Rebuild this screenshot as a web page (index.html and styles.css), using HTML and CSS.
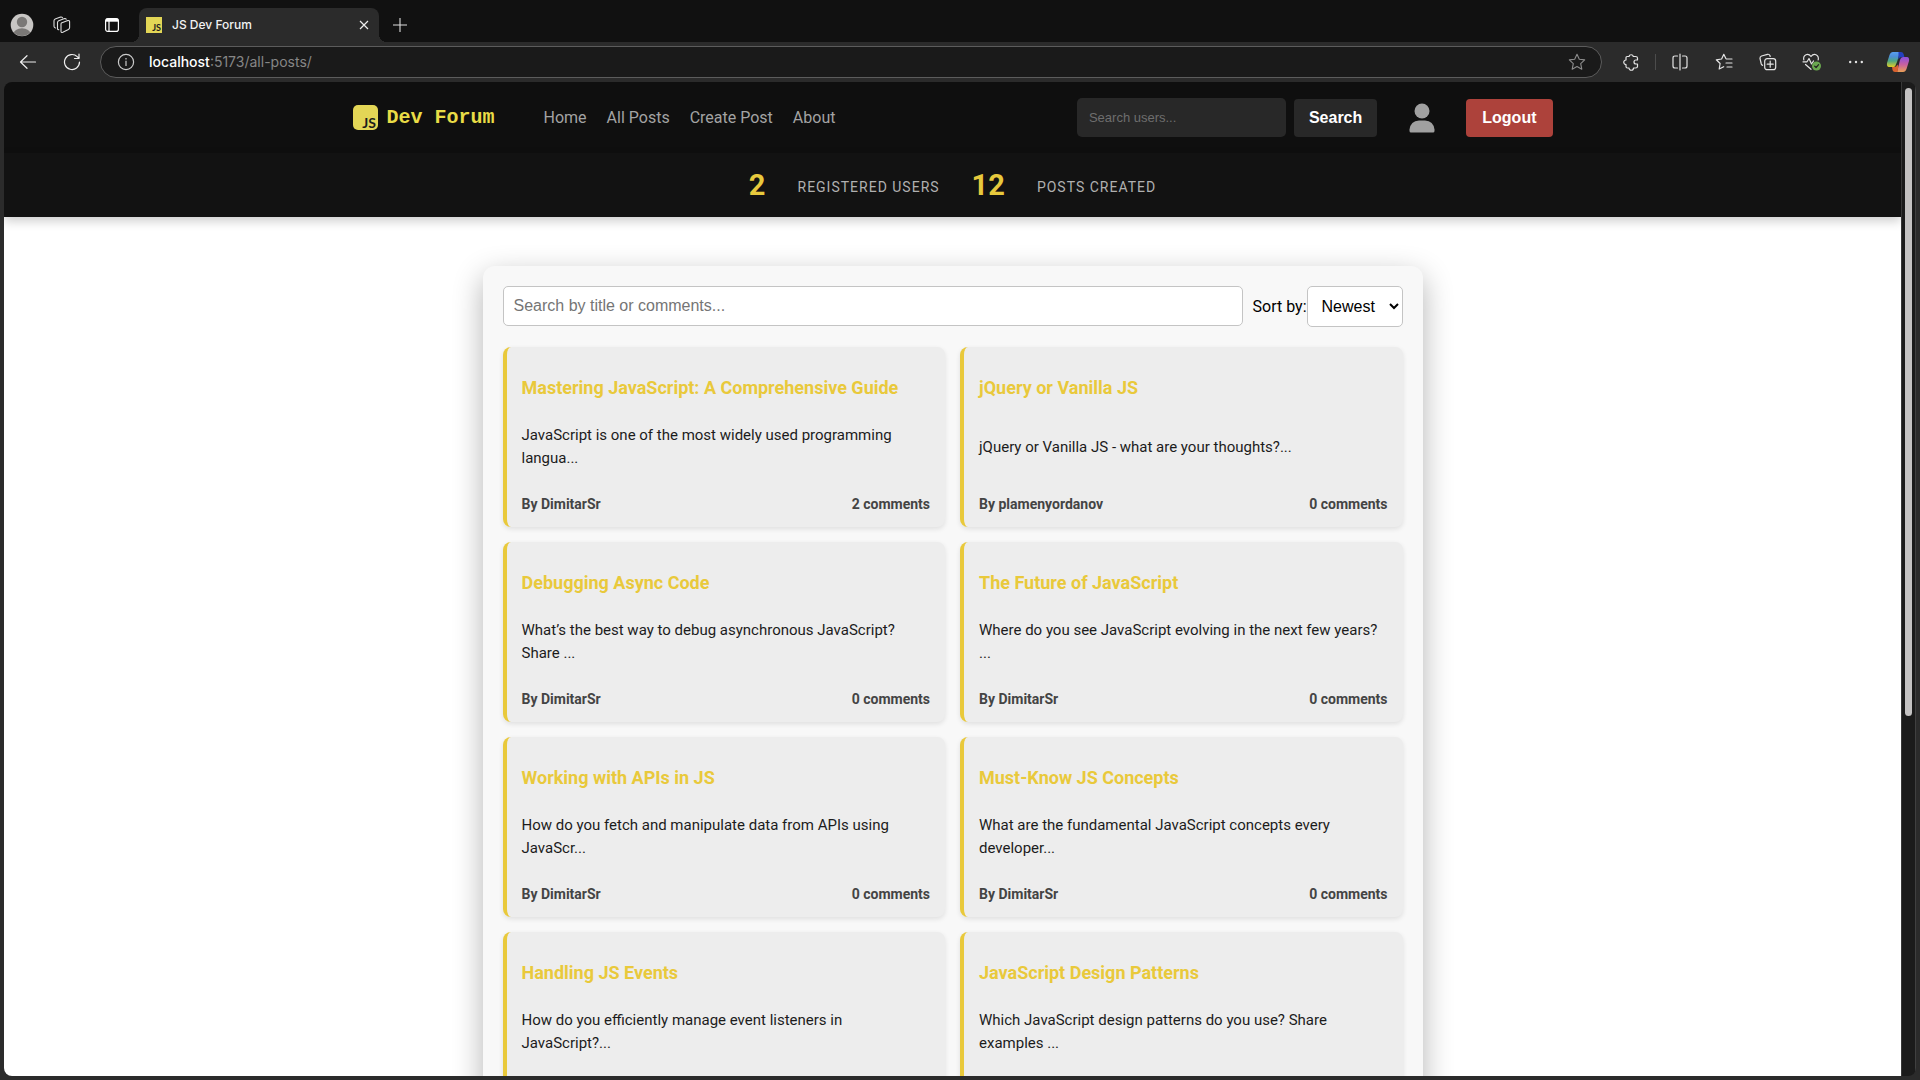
FILE: index.html
```html
<!DOCTYPE html>
<html lang="en">
<head>
<meta charset="utf-8">
<title>JS Dev Forum</title>
<link rel="stylesheet" href="styles.css">
</head>
<body>
<div class="tabstrip">
  <button class="icon-btn profile-btn" aria-label="Profile"><svg width="24" height="24" viewBox="0 0 24 24"><defs><clipPath id="pc"><circle cx="12" cy="12" r="11"/></clipPath></defs><circle cx="12" cy="12" r="11.300" fill="#c8c6c4"/><g clip-path="url(#pc)" fill="#7a7876"><circle cx="12" cy="9" r="5.200"/><ellipse cx="12" cy="21" rx="8.500" ry="5.800"/></g></svg></button>
  <button class="icon-btn spaces-btn" aria-label="Workspaces"><svg width="18" height="18" viewBox="0 0 18 18" fill="none" stroke="#ddd" stroke-width="1.1" stroke-linejoin="round" stroke-linecap="round"><path d="M8.3 7 14.8 4.6Q16.6 4.2 16.6 5.8V11.600Q16.600 13 15.400 13.500L9.800 16.300Q8 17 8 15.200V8.500Q8 7.500 8.300 7Z"/><path d="M5.800 13.800Q4.500 13.700 4.500 12.400V6.500Q4.500 5.200 5.700 4.700L11.500 2.600Q12.800 2.300 13.200 3.300"/><path d="M2.400 12Q1 11.500 1 10.300V4.800Q1 3.500 2.200 3L7.500 1.100Q8.900.7 9.500 1.800"/></svg></button>
  <button class="icon-btn tabs-btn" aria-label="Tab actions"><svg width="16" height="16" viewBox="0 0 16 16" fill="none" stroke="#fff" stroke-width="1.200"><rect x="1.600" y="1.600" width="12.800" height="12.800" rx="2.200"/><path d="M2 3.200h12" stroke-width="3"/><path d="M5 4v10.500"/></svg></button>
  <div class="tab">
    <svg width="16" height="16" viewBox="0 0 16 16"><rect width="16" height="16" fill="#e3d656"/><text x="15" y="14" text-anchor="end" class="js-small">JS</text></svg>
    <span class="tab-title">JS Dev Forum</span>
    <button class="icon-btn" aria-label="Close tab"><svg width="10" height="10" viewBox="0 0 10 10" stroke="#eee" stroke-width="1.200" fill="none"><path d="M1 1l8 8M9 1 1 9"/></svg></button>
  </div>
  <button class="icon-btn newtab-btn" aria-label="New tab"><svg width="14" height="14" viewBox="0 0 14 14" stroke="#ddd" stroke-width="1.100"><path d="M7 0v14M0 7h14"/></svg></button>
</div>

<div class="toolbar">
  <button class="icon-btn back-btn" aria-label="Back"><svg width="18" height="16" viewBox="0 0 18 16" fill="none" stroke="#eee" stroke-width="1.200" stroke-linecap="round" stroke-linejoin="round"><path d="M16.500 8H1.500M8 1.700 1.500 8 8 14.300"/></svg></button>
  <button class="icon-btn reload-btn" aria-label="Reload"><svg width="18" height="18" viewBox="0 0 18 18" fill="none" stroke="#eee" stroke-width="1.200" stroke-linecap="round" stroke-linejoin="round"><path d="M16.500 9A7.500 7.500 0 1 1 14.200 3.600L16 5.400M16 1v4.500h-4.500"/></svg></button>
  <div class="address">
    <svg width="18" height="18" viewBox="0 0 18 18" fill="none" stroke="#ccc" stroke-width="1.200"><circle cx="9" cy="9" r="7.600"/><path d="M9 7.800V13M9 5v1.400"/></svg>
    <span class="url"><b>localhost</b>:5173/all-posts/</span>
    <button class="icon-btn" aria-label="Add to favorites"><svg width="18" height="18" viewBox="0 0 18 18" fill="none" stroke="#8d8d8d" stroke-width="1.100" stroke-linejoin="round"><path d="M9 1.300 11.300 6.200 16.700 6.900 12.700 10.600 13.800 16.200 9 13.500 4.200 16.200 5.300 10.600 1.300 6.900 6.700 6.200Z"/></svg></button>
  </div>
  <div class="tools">
    <button class="icon-btn" aria-label="Extensions"><svg width="18" height="18" viewBox="0 0 18 18" fill="none" stroke="#e4e4e4" stroke-width="1.200" stroke-linejoin="round"><path d="M5 3.500H7A2.200 2.200 0 0 1 11.300 3.500H13.500Q15.500 3.500 15.500 5V7H14A2 2 0 0 0 14 11H15.500V13.500Q15.500 15 13.500 15H11.500A2.200 2.200 0 0 1 7 15H5.500Q4 15 4 13.500V11.500A2.200 2.200 0 0 1 4 7V4.500Q4 3.500 5 3.500Z"/></svg></button>
    <span class="divider"></span>
    <button class="icon-btn" aria-label="Split screen"><svg width="18" height="18" viewBox="0 0 18 18" fill="none" stroke="#e4e4e4" stroke-width="1.200" stroke-linecap="round"><path d="M6.500 3H4Q2 3 2 5v8q0 2 2 2h2.500M11.500 3H14q2 0 2 2v8q0 2-2 2h-2.500M9 1v16"/></svg></button>
    <button class="icon-btn" aria-label="Favorites"><svg width="18" height="18" viewBox="0 0 18 18" fill="none" stroke="#e4e4e4" stroke-width="1.200" stroke-linecap="round" stroke-linejoin="round"><path d="M11 5.700 8.800 1.300 6.600 6 1.300 6.800 5.100 10.500 4.200 16 8.700 13.700M11.500 6H17M11 10H17M12 14H17"/></svg></button>
    <button class="icon-btn" aria-label="Collections"><svg width="18" height="18" viewBox="0 0 18 18" fill="none" stroke="#e4e4e4" stroke-width="1.200" stroke-linecap="round" stroke-linejoin="round"><rect x="5.700" y="5.700" width="11" height="11" rx="2.500"/><path d="M11.200 8.200v6M8.200 11.200h6M3.600 12.400Q2.600 12 2.300 11L1 5.500Q.8 3.700 2.500 3L8.500 1.300Q10.300 1 10.900 2.500L11.200 3.500"/></svg></button>
    <button class="icon-btn essentials-btn" aria-label="Browser essentials"><svg width="20" height="18" viewBox="0 0 20 18" fill="none" stroke="#e4e4e4" stroke-width="1.200" stroke-linecap="round" stroke-linejoin="round"><path d="M1.800 7Q1 3 4 1.700 7 .8 9 3.500 11 .8 14 1.700 17 3 16.200 7M1 8.800H5L7 5.500 9.500 11 11.500 8M3.500 11.500 9 16.300"/><circle cx="14.500" cy="13" r="4.500" fill="#6aa84f" stroke="none"/><path d="m12.600 13.100 1.500 1.400 2.500-2.800" stroke="#222"/></svg></button>
    <button class="icon-btn" aria-label="Settings and more"><svg width="18" height="18" viewBox="0 0 18 18" fill="#e4e4e4"><circle cx="3.200" cy="9" r="1.200"/><circle cx="9" cy="9" r="1.200"/><circle cx="14.800" cy="9" r="1.200"/></svg></button>
    <button class="icon-btn" aria-label="Copilot"><svg width="24" height="22" viewBox="0 0 24 22"><defs><linearGradient id="ca" x1="0" y1="0" x2="0" y2="1"><stop offset="0" stop-color="#5a9ff0"/><stop offset=".3" stop-color="#4d8fd8"/><stop offset=".6" stop-color="#4fa87f"/><stop offset="1" stop-color="#e3cf25"/></linearGradient><linearGradient id="cb" x1="0" y1="0" x2="0" y2="1"><stop offset="0" stop-color="#8a50e0"/><stop offset=".5" stop-color="#c860a0"/><stop offset="1" stop-color="#e9a055"/></linearGradient></defs><path d="M7 1h7L11 11 9.500 14.500Q8.800 16 7.500 16H3Q.5 16 1 12L3.500 4Q4.500 1 7 1Z" fill="url(#ca)"/><path d="M12.500 1H15q2 0 2.600 2l.8 3h-3q-2 0-3 2.500Z" fill="#2440c0"/><path d="M17 21h-6L14 9q.8-3 3-3H21q2.500 0 2 4l-2.500 8q-1 3-3.500 3Z" fill="url(#cb)"/><path d="M11.500 21H9q-2 0-2.500-2L6 16h2.400q2 0 3-2.500l1 2Z" fill="#d9622f"/></svg></button>
  </div>
</div>

<div class="frame">
<div class="viewport">
  <header class="header">
    <div class="header-inner">
      <a class="logo" href="#"><svg width="25" height="25" viewBox="0 0 25 25"><rect width="25" height="25" rx="5" fill="#e3d656"/><text x="23" y="23" text-anchor="end" class="js-large">JS</text></svg>Dev Forum</a>
      <nav class="nav"><a href="#">Home</a><a href="#">All Posts</a><a href="#">Create Post</a><a href="#">About</a></nav>
      <form class="user-search">
        <input type="text" placeholder="Search users..." aria-label="Search users">
        <button type="button" class="btn">Search</button>
      </form>
      <a class="account" href="#" aria-label="Account"><svg width="26" height="30" viewBox="0 0 26 30" fill="#a0a0a0"><circle cx="13" cy="8" r="7.500"/><path d="M.5 28v-1.500Q1.500 18 10 17.500h6q8.500.5 9.500 9V28q0 1.500-1.500 1.500H2Q.5 29.500.5 28Z"/></svg></a>
      <button type="button" class="btn logout">Logout</button>
    </div>
  </header>
  <section class="stats">
    <span class="stat-number">2</span><span class="stat-label">Registered users</span>
    <span class="stat-number">12</span><span class="stat-label">Posts created</span>
  </section>
  <main class="posts">
    <div class="filters">
      <input type="text" placeholder="Search by title or comments..." aria-label="Search posts">
      <label for="sort">Sort by:</label>
      <select id="sort"><option>Newest</option></select>
    </div>
    <div class="grid">
      <article class="card"><h3>Mastering JavaScript: A Comprehensive Guide</h3><p>JavaScript is one of the most widely used programming langua...</p><footer><span>By DimitarSr</span><span>2 comments</span></footer></article>
      <article class="card"><h3>jQuery or Vanilla JS</h3><p>jQuery or Vanilla JS - what are your thoughts?...</p><footer><span>By plamenyordanov</span><span>0 comments</span></footer></article>
      <article class="card"><h3>Debugging Async Code</h3><p>What’s the best way to debug asynchronous JavaScript? Share ...</p><footer><span>By DimitarSr</span><span>0 comments</span></footer></article>
      <article class="card"><h3>The Future of JavaScript</h3><p>Where do you see JavaScript evolving in the next few years? ...</p><footer><span>By DimitarSr</span><span>0 comments</span></footer></article>
      <article class="card"><h3>Working with APIs in JS</h3><p>How do you fetch and manipulate data from APIs using JavaScr...</p><footer><span>By DimitarSr</span><span>0 comments</span></footer></article>
      <article class="card"><h3>Must-Know JS Concepts</h3><p>What are the fundamental JavaScript concepts every developer...</p><footer><span>By DimitarSr</span><span>0 comments</span></footer></article>
      <article class="card"><h3>Handling JS Events</h3><p>How do you efficiently manage event listeners in JavaScript?...</p><footer><span>By DimitarSr</span><span>0 comments</span></footer></article>
      <article class="card"><h3>JavaScript Design Patterns</h3><p>Which JavaScript design patterns do you use? Share examples ...</p><footer><span>By DimitarSr</span><span>0 comments</span></footer></article>
    </div>
  </main>
</div>
<div class="scrollbar"><div class="thumb"></div></div>
</div>
</body>
</html>
```
FILE: styles.css
```css
* { box-sizing: border-box; }
body {
  margin: 0;
  height: 100vh;
  display: flex;
  flex-direction: column;
  overflow: hidden;
  background: #2b2b2b;
  font-family: Roboto, sans-serif;
  font-size: 16px;
}
svg { display: block; flex: none; }
button, input, select { font-family: "Liberation Sans", Arial, sans-serif; }
a { text-decoration: none; color: inherit; }

/* Browser tab strip */
.icon-btn { border: 0; padding: 0; background: none; flex: none; }
.tabstrip {
  flex: none;
  display: flex;
  align-items: center;
  height: 42px;
  padding-left: 10px;
  background: #111;
}
.tabstrip .icon-btn { margin-top: 8px; }
.spaces-btn { margin-left: 19px; }
.tabs-btn { margin-left: 33px; }
.tab {
  position: relative;
  align-self: flex-end;
  display: flex;
  align-items: center;
  width: 240px;
  height: 34px;
  margin-left: 19px;
  padding: 0 10px 0 7px;
  border-radius: 8px 8px 0 0;
  background: #2b2b2b;
  color: #f2f2f2;
  font: 500 12px/16px Inter, sans-serif;
}
/* Curved feet on both sides of the active tab */
.tab::before, .tab::after {
  content: "";
  position: absolute;
  bottom: 0;
  width: 8px;
  height: 8px;
}
.tab::before { left: -8px; background: radial-gradient(circle at 0 0, #111 8px, #2b2b2b 8px); }
.tab::after { right: -8px; background: radial-gradient(circle at 100% 0, #111 8px, #2b2b2b 8px); }
.tab .icon-btn { margin-top: 0; }
.tab-title { flex: 1; margin-left: 10px; }
.newtab-btn { margin-left: 14px; }
.js-small { font: bold 9px Lato, sans-serif; fill: #1c1c1c; }
.js-large { font: bold 14px Lato, sans-serif; fill: #1c1c1c; }

/* Browser toolbar */
.toolbar {
  flex: none;
  display: flex;
  align-items: center;
  height: 40px;
  padding: 0 10px 0 19px;
}
.reload-btn { margin-left: 26px; }
.address {
  flex: 1;
  display: flex;
  align-items: center;
  height: 32px;
  margin-left: 19px;
  padding: 0 15px 0 16px;
  border: 1px solid #5c5c5c;
  border-radius: 16px;
  background: #1a1a1a;
}
.url {
  flex: 1;
  margin-left: 14px;
  color: #868686;
  font: 14px/20px Inter, sans-serif;
}
.url b { color: #fff; font-weight: 500; }
.tools { display: flex; align-items: center; gap: 26px; margin-left: 20px; }
.essentials-btn { margin: 0 -1px; }
.tools .icon-btn:last-child { margin-left: -5px; }
.divider { width: 1px; height: 16px; margin: 0 -11px 0 -11px; background: #4c4c4c; }

/* Page frame */
.frame {
  flex: 1;
  display: flex;
  min-height: 0;
  margin: 0 4px 4px;
  border-radius: 8px;
  overflow: hidden;
}
.viewport {
  flex: 1;
  min-width: 0;
  overflow-y: auto;
  scrollbar-width: none;
  background: #fff;
}
.scrollbar {
  width: 15px;
  padding: 6px 3px;
  border-left: 1px solid #383838;
  border-right: 1px solid #404040;
  background: #1b1b1b;
}
.thumb { height: 64%; border-radius: 4px; background: #c4c2c2; }

/* Site header */
.header { background: #0f0f0f; }
.header-inner {
  display: flex;
  align-items: center;
  max-width: 1200px;
  margin: 0 auto;
  padding: 16px 0;
}
.logo {
  display: flex;
  align-items: center;
  gap: 9px;
  color: #e9dc46;
  font: bold 20px/24px "Courier New", "Liberation Mono", monospace;
}
.nav { display: flex; gap: 20px; margin-left: 49px; color: #a3a3a3; }
.user-search { display: flex; align-items: center; gap: 8px; margin-left: auto; }
.user-search input {
  width: 209px;
  height: 39px;
  padding: 0 12px;
  border: 0;
  border-radius: 5px;
  background: #282828;
  color: #fff;
  font-size: 13px;
}
.user-search input::placeholder { color: #6e6e6e; }
.btn {
  height: 38px;
  padding: 0 15px;
  border: 0;
  border-radius: 4px;
  background: #282828;
  color: #fff;
  font-size: 16px;
  font-weight: bold;
}
.account { margin: 0 31px 0 32px; }
.logout { padding: 0 16px; background: #ad423b; }

.stats {
  display: flex;
  align-items: center;
  justify-content: center;
  gap: 32px;
  height: 64px;
  background: #121212;
  box-shadow: 0 4px 10px rgba(0, 0, 0, .2);
}
.stat-number { color: #e7c93d; font-size: 29px; font-weight: bold; }
.stat-label {
  padding-top: 4px;
  color: #b0b0b0;
  font-size: 14px;
  letter-spacing: 1px;
  text-transform: uppercase;
}

/* Post list */
.posts {
  max-width: 940px;
  margin: 49px auto;
  padding: 20px;
  border-radius: 12px;
  background: #f8f8f8;
  box-shadow: 0 10px 30px rgba(0, 0, 0, .3);
}
.filters { display: flex; align-items: center; margin-bottom: 20px; }
.filters input {
  flex: 1;
  align-self: flex-start;
  height: 40px;
  margin-right: 10px;
  padding: 0 10px;
  border: 1px solid #c4c4c4;
  border-radius: 5px;
  font-size: 16px;
}
.filters select {
  width: 96px;
  height: 41px;
  padding: 0 10px;
  border: 1px solid #c4c4c4;
  border-radius: 5px;
  background-color: #fff;
  color: #000;
  font-size: 16px;
}
.grid { display: grid; grid-template-columns: 1fr 1fr; gap: 15px; }
.card {
  display: flex;
  flex-direction: column;
  justify-content: space-between;
  min-height: 180px;
  padding: 15px;
  border-left: 4px solid #e9c93b;
  border-radius: 8px;
  background: #ededed;
  box-shadow: 0 2px 5px rgba(0, 0, 0, .1);
}
.card h3 { margin: 12px 0 0; color: #e9c93b; font-size: 18px; line-height: 28px; }
.card p { margin: 0; color: #1c1c1c; font-size: 15px; line-height: 23px; }
.card footer {
  display: flex;
  justify-content: space-between;
  padding-top: 4px;
  color: #444;
  font-size: 14px;
  line-height: 16px;
  font-weight: bold;
}
```
